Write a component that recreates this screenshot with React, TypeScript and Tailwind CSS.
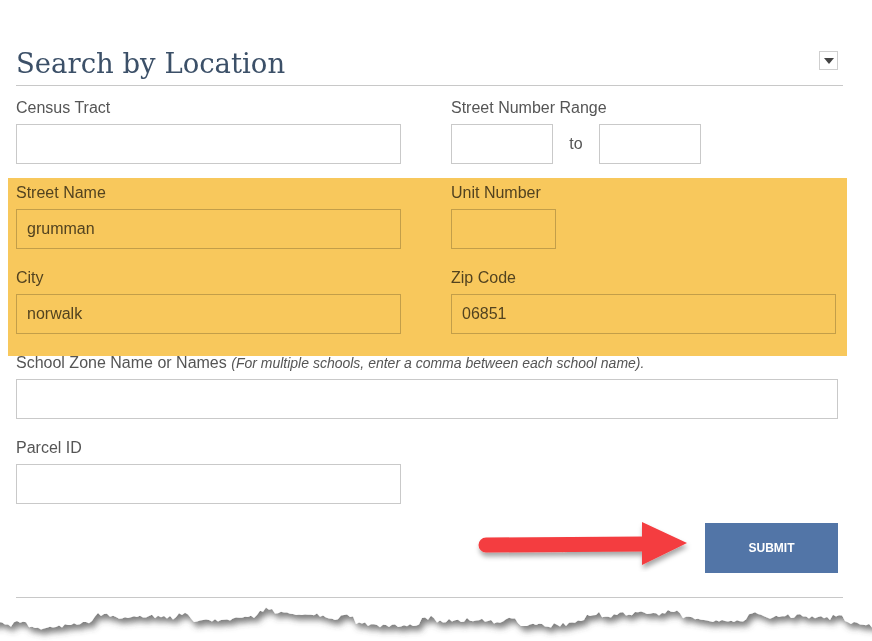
import React from "react";

const font = { fontFamily: '"Liberation Sans", Arial, sans-serif' };

function Field({ label, value = "", className = "" }: { label: React.ReactNode; value?: string; className?: string }) {
    return (
        <div className={className}>
            <div className="h-5 text-[16px] leading-5 text-[#555]">{label}</div>
            <div className="mt-1.5 h-10 border border-[#c9c9c9] bg-white px-[10px] flex items-center text-[16px] text-[#555]">
                {value}
            </div>
        </div>
    );
}

function seeded(n: number) {
    const x = Math.sin(n * 12.9898) * 43758.5453;
    return x - Math.floor(x);
}

function TornEdge() {
    const pts: string[] = ["-10,0"];
    for (let x = -10; x <= 890; x += 3) {
        const wave = Math.sin(x / 27) * 4 + Math.sin(x / 71 + 1.3) * 4 + (Math.sin(x / 13) > 0.85 ? -5 : 0);
        const y = 20 + wave + (seeded(x) - 0.5) * 4;
        pts.push(`${x},${y.toFixed(1)}`);
    }
    pts.push("890,0");
    return (
        <svg width="872" height="41" className="block">
            <defs>
                <filter id="tear" x="-5%" y="-50%" width="110%" height="200%">
                    <feDropShadow dx="3" dy="5" stdDeviation="3" floodColor="#444" floodOpacity="0.7" />
                </filter>
            </defs>
            <polygon points={pts.join(" ")} fill="#fff" filter="url(#tear)" />
        </svg>
    );
}

function Arrow() {
    return (
        <svg width="226" height="54" viewBox="0 0 226 54" className="block">
            <defs>
                <filter id="arrowShadow" x="-10%" y="-30%" width="120%" height="170%">
                    <feDropShadow dx="1" dy="4" stdDeviation="2.5" floodColor="#000" floodOpacity="0.35" />
                </filter>
            </defs>
            <g filter="url(#arrowShadow)" fill="#f43c3f">
                <path d="M16 19.5 L174 18.5 L174 33.5 L16 34.5 A7.5 7.5 0 0 1 16 19.5 Z" />
                <path d="M172 4 L217 25 L172 47 Z" />
            </g>
        </svg>
    );
}

export default function App() {
    return (
        <div className="w-[872px] h-[641px] bg-white overflow-hidden" style={font}>
            <div className="relative px-4 pt-[44px]">
                <div className="flex items-end justify-between w-[827px] border-b border-[#c8c8c8] pb-[3px]">
                    <h2
                        className="text-[27.5px] leading-[38px] text-[#3c5068]"
                        style={{ fontFamily: '"DejaVu Serif", "Liberation Serif", serif' }}
                    >
                        Search by Location
                    </h2>
                    <div className="mb-[12px] mr-[5px] w-[19px] h-[19px] border border-[#cfcfcf] flex items-center justify-center">
                        <div className="w-0 h-0 border-l-[5px] border-r-[5px] border-t-[6px] border-l-transparent border-r-transparent border-t-[#444]" />
                    </div>
                </div>

                <div className="grid grid-cols-[385px_385px] gap-x-[50px] gap-y-[19px] mt-[12px]">
                    <Field label="Census Tract" />
                    <div>
                        <div className="h-5 text-[16px] leading-5 text-[#555]">Street Number Range</div>
                        <div className="mt-1.5 flex items-center">
                            <div className="w-[102px] h-10 border border-[#c9c9c9]" />
                            <span className="w-[46px] text-center text-[16px] text-[#555]">to</span>
                            <div className="w-[102px] h-10 border border-[#c9c9c9]" />
                        </div>
                    </div>
                    <Field label="Street Name" value="grumman" />
                    <Field label="Unit Number" className="w-[105px]" />
                    <Field label="City" value="norwalk" />
                    <Field label="Zip Code" value="06851" />
                </div>

                <Field
                    className="mt-[19px] w-[822px]"
                    label={
                        <>
                            School Zone Name or Names{" "}
                            <span className="italic text-[14px]">(For multiple schools, enter a comma between each school name).</span>
                        </>
                    }
                />
                <Field className="mt-[19px] w-[385px]" label="Parcel ID" />

                <div className="mt-[19px] w-[822px] flex items-center justify-end">
                    <div className="mr-[9px] mt-[-6px]">
                        <Arrow />
                    </div>
                    <button className="w-[133px] h-[50px] bg-[#5275a7] text-white text-[12px] font-bold">
                        SUBMIT
                    </button>
                </div>

                <div className="mt-[24px] w-[827px] border-b border-[#c8c8c8]" />

                {/* highlight annotation */}
                <div className="absolute left-[8px] top-[178px] w-[839px] h-[178px] bg-[#f8c85c] mix-blend-multiply pointer-events-none" />
            </div>
            <div className="mt-[2px]">
                <TornEdge />
            </div>
        </div>
    );
}
